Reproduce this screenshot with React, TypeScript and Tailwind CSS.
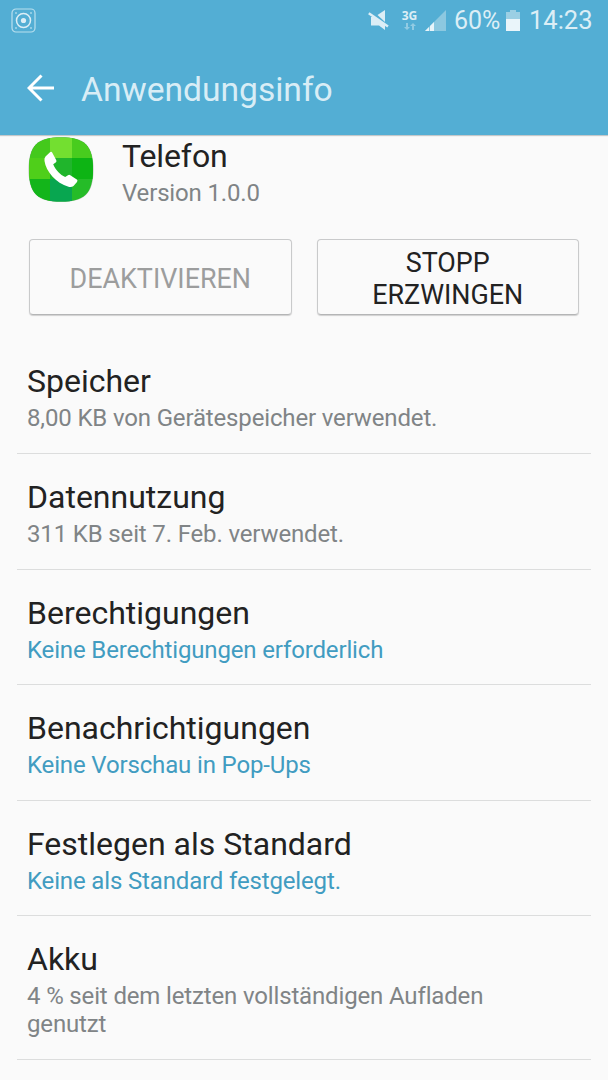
import { clsx } from "clsx";

type Entry = {
  title: string;
  summary: string;
  link?: boolean;
};

const entries: Entry[] = [
  { title: "Speicher", summary: "8,00 KB von Gerätespeicher verwendet." },
  { title: "Datennutzung", summary: "311 KB seit 7. Feb. verwendet." },
  { title: "Berechtigungen", summary: "Keine Berechtigungen erforderlich", link: true },
  { title: "Benachrichtigungen", summary: "Keine Vorschau in Pop-Ups", link: true },
  { title: "Festlegen als Standard", summary: "Keine als Standard festgelegt.", link: true },
  { title: "Akku", summary: "4 % seit dem letzten vollständigen Aufladen genutzt" },
];

function StatusBar() {
  return (
    <div className="flex h-10 items-center pl-[11px] pr-4 text-[#dceef6]">
      <svg className="h-[25px] w-[25px]" viewBox="0 0 25 25" fill="none" stroke="#b9dfee">
        <rect x="1" y="1" width="23" height="23" rx="4" strokeWidth="1.2" />
        <circle cx="12.5" cy="12.5" r="7" stroke="#dceef6" strokeWidth="1.5" />
        <circle cx="12.5" cy="12.5" r="2.6" fill="#dceef6" stroke="none" />
        <path d="M4.2 5h1.6M19.2 5h1.6M4.2 20h1.6M19.2 20h1.6" strokeWidth="1.4" />
      </svg>

      <svg className="ml-auto h-5 w-[22px]" viewBox="0 0 22 20" fill="currentColor">
        <path d="M17 0v12L9.500 5z" />
        <path d="M3 7h4l10 7v6l-6-4.500H3z" />
        <path d="M.8 3.200 20 16.500" fill="none" stroke="currentColor" strokeWidth="2.4" />
      </svg>
      <div className="mr-[-1px] ml-[11px] flex w-[17px] flex-col items-center">
        <span className="font-['Open_Sans',sans-serif] text-[12px] leading-[11px] font-bold">3G</span>
        <svg className="mt-[2px] h-[7px] w-3" viewBox="0 0 12 7" fill="#91cbe3">
          <path d="M2 0h2v4h2L3 7 0 4h2zM8 7h2V3h2L9 0 6 3h2z" />
        </svg>
      </div>
      <svg className="ml-2 h-[21px] w-[21px]" viewBox="0 0 21 21">
        <path d="M21 0v21H0z" fill="#8cc8e0" />
        <path d="M0 21 4 17v4zM5 16l4-4v9H5z" fill="#e8f4fa" />
      </svg>
      <span className="ml-[8px] w-[47px] pt-0.5 text-[25px] leading-10 tracking-[-0.1px] whitespace-nowrap">60%</span>
      <svg className="ml-[5px] h-[21px] w-3.5" viewBox="0 0 14 21">
        <path d="M4 0h6v2h4v8H0V2h4z" fill="#9bcfe4" />
        <path d="M0 9h14v12H0z" fill="#eaf5fa" />
      </svg>
      <span className="ml-[9px] w-[63px] text-[25.500px] leading-10 whitespace-nowrap">14:23</span>
    </div>
  );
}

function AppIcon() {
  return (
    <svg className="h-[66px] w-[66px] shrink-0" viewBox="0 0 66 66">
      <defs>
        <clipPath id="tile">
          <path d="M33 1.500C56 1.500 65 9 65 33.500S56 65.500 33 65.500 1 58 1 33.500 10 1.500 33 1.500z" />
        </clipPath>
      </defs>
      <path d="M33 1C56 1 65.500 9 65.500 33.500S56 66 33 66 .5 58 .5 33.500 10 1 33 1z" fill="#b9c4b9" />
      <g clipPath="url(#tile)">
        <path d="M0 0h66v66H0z" fill="#25bc28" />
        <path d="M0 0h22v22H0z" fill="#44c91c" />
        <path d="M22 0h22v22H22z" fill="#73df30" />
        <path d="M44 0h22v22H44z" fill="#48cc1e" />
        <path d="M0 22h22v21H0z" fill="#4fcf1a" />
        <path d="M22 22h22v21H22z" fill="#20b52c" />
        <path d="M44 22h22v21H44z" fill="#0db414" />
        <path d="M0 43h22v23H0z" fill="#13b51a" />
        <path d="M22 43h22v23H22z" fill="#08a650" />
      </g>
      <path
        d="M17.500 20.500 22 16.200q1.500-1 2.300.5l4 7.500q.6 1.500-.6 2.300l-2.500 1.700c2.500 6 7 10.500 12 12.800l2.800-1.800q1-.8 2.300 0l6.500 4.300q1.300 1 .2 2.400L45.500 50q-2 1.600-5 .8C28 47 18 35.500 16.500 25q-.5-3 1-4.500z"
        fill="#fff"
      />
    </svg>
  );
}

function ActionButton({ label, disabled }: { label: string; disabled?: boolean }) {
  return (
    <button
      type="button"
      disabled={disabled}
      className={clsx(
        "h-[76px] flex-1 rounded-[4px] border border-[#c9cacb] border-b-[#b4b5b6] px-8 pt-[3px] text-[26.900px] leading-8 shadow-[0_1px_1px_#d0d0d0]",
        disabled ? "text-[#9c9d9d]" : "text-[#222]",
      )}
    >
      {label}
    </button>
  );
}

export default function App() {
  return (
    <div className="h-[1080px] w-[608px] overflow-hidden bg-[#fafafa] font-[Roboto,sans-serif]">
      <header className="h-[135px] bg-[#53aed4] shadow-[0_1px_1px_#c4c8ca]">
        <StatusBar />
        <div className="flex h-[96px] items-center pl-[27px]">
          <svg className="h-7 w-7" viewBox="0 0 28 28" fill="none" stroke="#fff" strokeWidth="3">
            <path d="M14.500 1.500 2 14l12.500 12.500M2 14h25" />
          </svg>
          <h1 className="ml-[26px] pt-1 text-[33.600px] text-[#d8edf6]">Anwendungsinfo</h1>
        </div>
      </header>

      <main>
        <section className="h-[203.400px] pl-7">
          <div className="flex pt-px">
            <AppIcon />
            <div className="ml-7 pt-px">
              <h2 className="text-[32px] leading-[38px] tracking-[-0.1px] text-[#222]">Telefon</h2>
              <p className="mt-1 text-[24px] leading-7 tracking-[-0.160px] text-[#808486]">Version 1.0.0</p>
            </div>
          </div>
          <div className="mt-8 flex gap-[25px] pr-[29px] pl-px">
            <ActionButton label="DEAKTIVIEREN" disabled />
            <ActionButton label="STOPP ERZWINGEN" />
          </div>
        </section>

        <ul className="px-[17px]">
          {entries.map((entry) => (
            <li key={entry.title} className="border-b border-[#dcdddd] px-2.5 pt-6 pb-[20.600px]">
              <h3 className="text-[32px] leading-[38px] text-[#222]">{entry.title}</h3>
              <p
                className={clsx(
                  "mt-1 max-w-[500px] text-[24px] leading-7 tracking-[-0.150px]",
                  entry.link ? "text-[#419cc1]" : "text-[#808486]",
                )}
              >
                {entry.summary}
              </p>
            </li>
          ))}
        </ul>
      </main>
    </div>
  );
}
